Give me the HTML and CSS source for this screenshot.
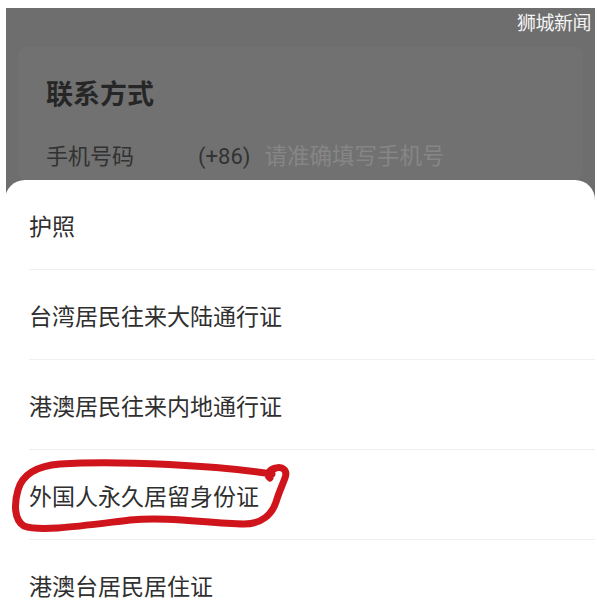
FILE: index.html
```html
<!DOCTYPE html>
<html lang="zh-CN">
<head>
<meta charset="utf-8">
<title>证件类型</title>
<link rel="stylesheet" href="styles.css">
</head>
<body>
<div class="frame">
  <div class="watermark">狮城新闻</div>
  <div class="backdrop">
    <div class="card">
      <h2 class="card-title">联系方式</h2>
      <div class="field">
        <span class="field-label">手机号码</span>
        <span class="field-code">(+86)</span>
        <span class="field-placeholder">请准确填写手机号</span>
      </div>
    </div>
  </div>
  <div class="sheet">
    <ul class="options">
      <li class="option">护照</li>
      <li class="option">台湾居民往来大陆通行证</li>
      <li class="option">港澳居民往来内地通行证</li>
      <li class="option">外国人永久居留身份证</li>
      <li class="option">港澳台居民居住证</li>
    </ul>
    <svg class="mark" width="300" height="90" viewBox="0 0 300 90" xmlns="http://www.w3.org/2000/svg">
      <path d="M272 24 C220 16 120 10 60 14 C35 16 22 26 18 40 C14 54 14 70 24 76 C40 82 80 76 130 70 C170 66 210 74 244 74 C262 74 272 64 276 52 C279 42 282 36 285 28 C288 20 282 16 276 18 C268 20 266 26 270 28" fill="none" stroke="#cf141b" stroke-width="7" stroke-linecap="round" stroke-linejoin="round"/>
    </svg>
  </div>
</div>
</body>
</html>
```
FILE: styles.css
```css
html, body {
  margin: 0;
  padding: 0;
  background: #ffffff;
}
body {
  width: 597px;
  height: 611px;
  overflow: hidden;
  font-family: "Noto Sans CJK SC", "Noto Sans", sans-serif;
}
.frame {
  position: relative;
  margin: 8px 2px 0 6px;
  height: 603px;
  background: #6e6e6e;
  overflow: hidden;
}
.watermark {
  position: absolute;
  top: 2px;
  right: 4px;
  color: #f4f4f4;
  font-size: 19px;
  line-height: 24px;
  letter-spacing: -0.5px;
}
.backdrop {
  height: 172px;
  padding: 39px 12px 0 12px;
  box-sizing: border-box;
}
.card {
  background: #717171;
  border-radius: 8px;
  height: 133px;
  padding: 0 28px;
}
.card-title {
  margin: 0;
  padding-top: 28px;
  font-size: 27px;
  line-height: 36px;
  font-weight: 700;
  color: #262626;
}
.field {
  display: flex;
  align-items: baseline;
  margin-top: 28px;
  font-size: 22px;
  line-height: 30px;
}
.field-label {
  color: #323232;
  width: 152px;
}
.field-code {
  color: #333333;
  margin-right: 14px;
  font-family: "Roboto", "Noto Sans CJK SC", sans-serif;
}
.field-placeholder {
  color: #868686;
  font-size: 22.5px;
}
.sheet {
  position: relative;
  margin-left: -1px;
  background: #ffffff;
  border-radius: 20px 20px 0 0;
  height: 440px;
}
.options {
  list-style: none;
  margin: 0;
  padding: 0 0 0 24px;
}
.option {
  height: 90px;
  box-sizing: border-box;
  display: flex;
  align-items: center;
  border-bottom: 1px solid #efefef;
  font-size: 23px;
  color: #2f2f2f;
}
.mark {
  position: absolute;
  left: -5px;
  top: 270px;
}
```
